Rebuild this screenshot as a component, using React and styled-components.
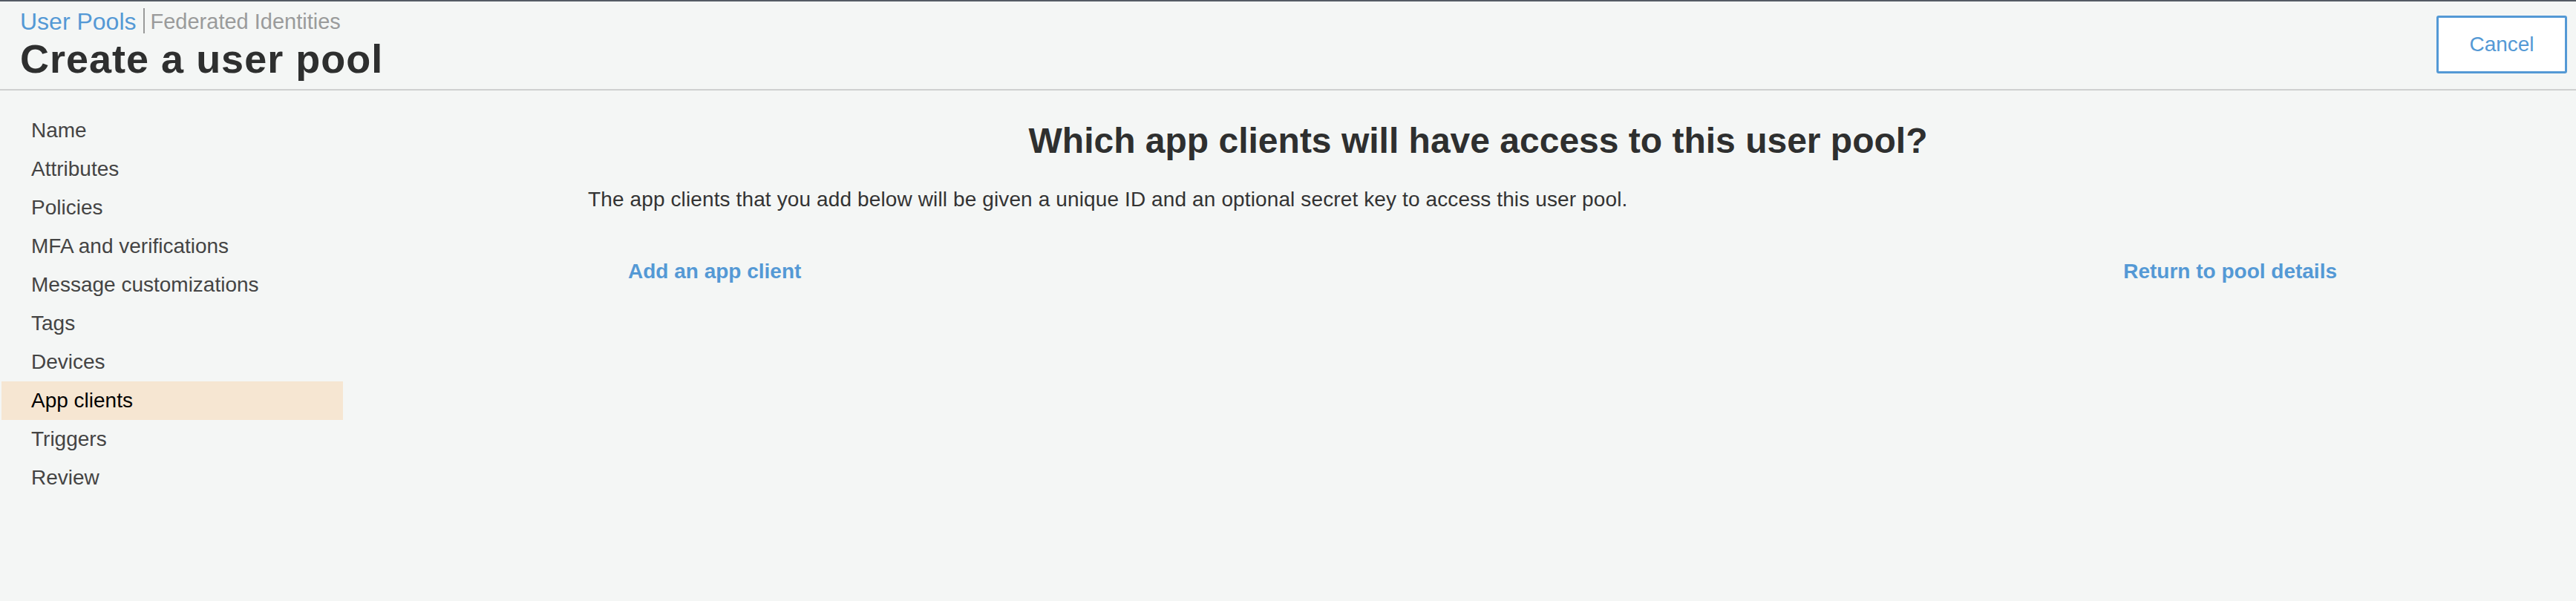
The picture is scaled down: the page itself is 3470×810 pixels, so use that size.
import React from 'react'
import styled, { createGlobalStyle } from 'styled-components'

const GlobalStyle = createGlobalStyle`
  html, body {
    margin: 0;
    padding: 0;
    height: 100%;
    background: #f4f6f5;
  }
  body {
    font-family: "Liberation Sans", Arial, Helvetica, sans-serif;
    color: #333;
  }
  #root {
    min-height: 100%;
  }
`

const Page = styled.div`
  min-height: 810px;
  background: #f4f6f5;
`

const TopBar = styled.header`
  display: flex;
  justify-content: space-between;
  align-items: flex-start;
  border-top: 2px solid #545b64;
  border-bottom: 2px solid #cfd0d0;
  padding: 0 12px 13px 27px;
`

const TitleBlock = styled.div`
  display: flex;
  flex-direction: column;
  padding-top: 9px;
`

const Crumbs = styled.div`
  display: flex;
  height: 36px;
`

const Crumb = styled.a`
  font-size: ${p => (p.active ? '32px' : '29px')};
  line-height: 36px;
  color: ${p => (p.active ? '#5499d5' : '#9a9b9b')};
  text-decoration: none;
  cursor: pointer;
`

const CrumbDivider = styled.span`
  width: 2px;
  height: 34px;
  margin: 0 8px 0 9px;
  background: #9a9a9a;
`

const PageTitle = styled.h1`
  margin: 4px 0 0;
  font-size: 54px;
  line-height: 56px;
  font-weight: 700;
  letter-spacing: 1px;
  color: #2e2f2f;
`

const CancelButton = styled.button`
  margin-top: 19px;
  width: 176px;
  height: 78px;
  display: flex;
  align-items: center;
  justify-content: center;
  background: #fff;
  border: 3px solid #5499d5;
  border-radius: 3px;
  color: #5499d5;
  font-family: inherit;
  font-size: 28px;
  cursor: pointer;
`

const Body = styled.div`
  display: flex;
  align-items: flex-start;
`

const SideNav = styled.nav`
  width: 460px;
  margin: 28px 0 0 2px;
  display: flex;
  flex-direction: column;
`

const NavItem = styled.div`
  height: 52px;
  line-height: 52px;
  padding-left: 40px;
  font-size: 28px;
  color: ${p => (p.selected ? '#000' : '#444')};
  background: ${p => (p.selected ? '#f6e6d2' : 'transparent')};
  cursor: pointer;
`

const Main = styled.main`
  flex: 1;
  padding-left: 50px;
`

const Content = styled.section`
  max-width: 2398px;
  margin: 0 auto;
`

const Question = styled.h2`
  margin: 40px 0 0;
  text-align: center;
  font-size: 48px;
  line-height: 56px;
  font-weight: 700;
  color: #2e2f2f;
`

const Intro = styled.p`
  margin: 33px 0 0;
  font-size: 28px;
  line-height: 36px;
  letter-spacing: 0.12px;
  color: #333;
`

const Actions = styled.div`
  display: flex;
  justify-content: space-between;
  margin-top: 61px;
  padding: 0 42px 0 54px;
`

const ActionLink = styled.a`
  font-size: 28px;
  line-height: 36px;
  font-weight: 700;
  color: #5499d5;
  text-decoration: none;
  cursor: pointer;
`

const steps = [
  'Name',
  'Attributes',
  'Policies',
  'MFA and verifications',
  'Message customizations',
  'Tags',
  'Devices',
  'App clients',
  'Triggers',
  'Review'
]

export default function App () {
  return (
    <Page>
      <GlobalStyle />
      <TopBar>
        <TitleBlock>
          <Crumbs>
            <Crumb active>User Pools</Crumb>
            <CrumbDivider />
            <Crumb>Federated Identities</Crumb>
          </Crumbs>
          <PageTitle>Create a user pool</PageTitle>
        </TitleBlock>
        <CancelButton>Cancel</CancelButton>
      </TopBar>
      <Body>
        <SideNav>
          {steps.map(step => (
            <NavItem key={step} selected={step === 'App clients'}>
              {step}
            </NavItem>
          ))}
        </SideNav>
        <Main>
          <Content>
            <Question>Which app clients will have access to this user pool?</Question>
            <Intro>
              The app clients that you add below will be given a unique ID and an optional secret key to access this user pool.
            </Intro>
            <Actions>
              <ActionLink>Add an app client</ActionLink>
              <ActionLink>Return to pool details</ActionLink>
            </Actions>
          </Content>
        </Main>
      </Body>
    </Page>
  )
}
